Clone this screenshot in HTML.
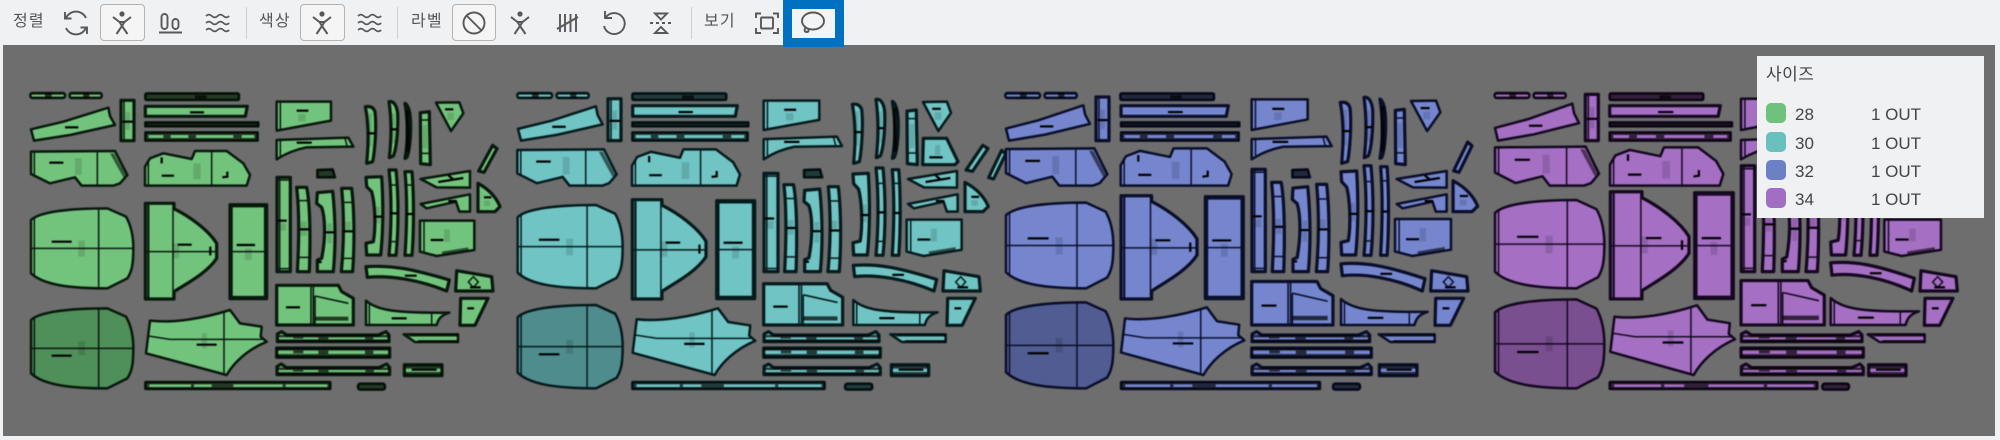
<!DOCTYPE html>
<html lang="ko"><head><meta charset="utf-8"><title>정렬</title>
<style>
html,body{margin:0;padding:0;background:#f0f1f3;width:2000px;height:440px;overflow:hidden;font-family:"Liberation Sans","Noto Sans CJK KR",sans-serif}
#gray{position:absolute;left:3px;top:45px;width:1992px;height:391px;background:#6e6e6e}
#pc{position:absolute;left:0;top:0;filter:blur(.6px)}
symbol{overflow:visible}
#pc *{vector-effect:non-scaling-stroke}
.o{stroke-width:2.5;stroke-linejoin:round}
.h{stroke-width:3.2;stroke-linejoin:round}
.l{fill:none;stroke-width:1.5}
.t{fill:none;stroke-width:2.2;stroke:#000}
.d{fill:#000;fill-opacity:.7;stroke:none}
.m{fill:#000;fill-opacity:.13;stroke:none}
#ic{position:absolute;left:0;top:0;filter:blur(.3px)}
#ic .s{fill:none;stroke:#585858;stroke-width:1.9}
.lb{position:absolute;color:#555;font-size:16px;letter-spacing:1.2px;line-height:20px;top:12px;filter:blur(.25px)}
.btn{position:absolute;top:4px;height:37px;background:#f5f5f6;border:1px solid #b4b4b4;border-radius:4px;box-sizing:border-box}
.sep{position:absolute;top:7px;height:32px;width:1px;background:#cfcfd1}
#blue{position:absolute;left:783px;top:0;width:61px;height:47px;box-sizing:border-box;border:9px solid #0070c0;background:#f3f4f5}
#panel{position:absolute;left:1757px;top:56px;width:227px;height:162px;background:#f0f1f3;color:#444;filter:blur(.25px)}
#panel div{position:absolute}
.sw{left:9px;width:20px;height:20px;border-radius:5px}
.n{left:38px;font-size:17px;line-height:20px}
.v{left:114px;font-size:17px;line-height:20px}
</style></head><body>
<div id="gray"></div>

<svg id="pc" width="2000" height="440" viewBox="0 0 6000 1320" xmlns="http://www.w3.org/2000/svg">
<defs>
<symbol id="s1" viewBox="31 68 104 17" preserveAspectRatio="none"><rect class="o" x="31" y="69" width="104" height="15" rx="6"/><rect class="d" x="33" y="71" width="100" height="3"/><rect class="d" x="33" y="80" width="100" height="3"/><rect class="d" x="75" y="68" width="20" height="17"/></symbol>
<symbol id="big" viewBox="33 415 307 240" preserveAspectRatio="none"><path class="o" d="M33 450C60 425 150 415 262 415L318 440C334 468 340 500 340 535C340 585 335 605 322 625L262 655C150 655 70 645 33 610Z"/><path class="l" d="M236 415V655M33 535H340M43 442V616"/><path class="t" d="M95 515H155"/><rect class="m" x="175" y="512" width="20" height="48"/></symbol>
<symbol id="dk" viewBox="33 415 307 240" preserveAspectRatio="none"><path class="o" d="M33 450C60 425 150 415 262 415L318 440C334 468 340 500 340 535C340 585 335 605 322 625L262 655C150 655 70 645 33 610Z"/><path class="l" d="M236 415V655M33 535H340M43 442V616"/><path class="t" d="M95 557H155"/><rect class="m" x="175" y="515" width="20" height="40"/></symbol>
<symbol id="a" viewBox="33 112 252 100" preserveAspectRatio="none"><path class="o" d="M33 178L130 155L265 113L270 138L285 165L150 195L42 212Z"/><path class="t" d="M135 172H175"/></symbol>
<symbol id="v" viewBox="302 90 41 123" preserveAspectRatio="none"><rect class="h" x="303" y="91" width="39" height="121"/><path class="l" d="M312 91V212"/><path class="t" d="M308 155H338"/><rect class="m" x="316" y="125" width="14" height="55"/></symbol>
<symbol id="b" viewBox="33 243 289 104" preserveAspectRatio="none"><path class="o" d="M33 245L285 243L322 315L300 340L280 347L185 347L165 322L90 340L33 312Z"/><path class="l" d="M232 243V347M43 245V318"/><path d="M270 250L310 322L318 315L282 250Z" fill="#000" fill-opacity=".55" stroke="none"/><path class="t" d="M88 278H130"/><rect class="m" x="165" y="265" width="20" height="50"/></symbol>
<symbol id="r1" viewBox="375 69 283 22" preserveAspectRatio="none"><rect class="o" x="376" y="70" width="281" height="20" rx="4"/><rect class="d" x="376" y="70" width="281" height="20" rx="4"/><rect class="d" x="525" y="76" width="35" height="10"/></symbol>
<symbol id="r2" viewBox="375 108 307 32" preserveAspectRatio="none"><path class="h" d="M376 109H682L676 139H376Z"/><path class="t" d="M510 127H552"/></symbol>
<symbol id="r3" viewBox="375 156 341 14" preserveAspectRatio="none"><rect class="o" x="376" y="157" width="339" height="12"/><rect class="d" x="376" y="157" width="339" height="12" style="fill-opacity:.78"/></symbol>
<symbol id="r4" viewBox="375 186 339 27" preserveAspectRatio="none"><rect class="o" x="376" y="187" width="337" height="25"/><path class="d" d="M376 187H713V195H376ZM376 204H713V212H376ZM376 195H386V204H376ZM703 195H713V204H703ZM505 193H528V206H505ZM640 193H665V206H640ZM430 195H452V204H430Z"/></symbol>
<symbol id="c" viewBox="375 243 315 104" preserveAspectRatio="none"><path class="o" d="M375 347L375 290L390 265L430 250L515 267L525 243L620 243L670 280L690 315L680 347Z"/><path class="l" d="M575 243V347M385 272V347"/><path class="t" d="M425 317H462M425 262V280M622 305V320L607 322"/><rect class="m" x="520" y="280" width="22" height="48"/></symbol>
<symbol id="d" viewBox="375 398 215 290" preserveAspectRatio="none"><path class="h" d="M376 400H462V416C510 440 565 480 590 520V565C560 610 500 640 462 665V687H376Z"/><path class="l" d="M459 400V687M376 545H590"/><path class="l" d="M385 404V683" style="stroke-width:2.2"/><path class="t" d="M473 524H515M571 530V556"/><rect class="m" x="458" y="520" width="20" height="45"/></symbol>
<symbol id="e" viewBox="628 402 114 286" preserveAspectRatio="none"><rect class="h" x="630" y="404" width="110" height="282"/><rect class="l" x="636" y="410" width="98" height="270"/><path class="l" d="M630 545H740"/><path class="t" d="M650 525H705"/><rect class="m" x="675" y="535" width="20" height="35"/></symbol>
<symbol id="f" viewBox="378 720 362 195" preserveAspectRatio="none"><path class="o" d="M390 752C460 760 550 745 630 720L660 760L725 770L722 800L740 815C680 840 640 880 620 915L378 850Z"/><path class="l" d="M612 725V912M385 798L450 808H735"/><path class="t" d="M530 824H590"/><rect class="m" x="545" y="790" width="16" height="45"/></symbol>
<symbol id="g" viewBox="375 935 557 23" preserveAspectRatio="none"><rect class="o" x="376" y="936" width="555" height="21" rx="2"/><path class="d" d="M376 936H931V943H376ZM376 951H931V957H376ZM376 943H388V951H376ZM922 943H931V951H922ZM513 943H522V951H513ZM788 943H797V951H788ZM575 943H640V951H575Z"/></symbol>
<symbol id="h" viewBox="769 93 164 90" preserveAspectRatio="none"><path class="o" d="M770 95H933V152L770 182Z"/><path class="l" d="M781 95V178"/><path class="t" d="M830 122H865"/><rect class="m" x="835" y="132" width="22" height="22"/></symbol>
<symbol id="i" viewBox="769 203 231 65" preserveAspectRatio="none"><path class="o" d="M770 210L985 203L1000 230L860 232C820 240 790 255 770 268Z"/><path class="l" d="M781 210V258M975 205L982 230"/><path class="t" d="M830 218H875"/></symbol>
<symbol id="j" viewBox="890 295 55 30" preserveAspectRatio="none"><path class="o" d="M892 300L938 298L945 322H892Z"/><rect class="d" x="892" y="298" width="50" height="24"/></symbol>
<symbol id="k1" viewBox="770 320 42 286" preserveAspectRatio="none"><rect class="h" x="771" y="322" width="40" height="283"/><path class="l" d="M779 322V605M771 330H811M771 596H811"/><path class="t" d="M773 452H800"/><rect class="m" x="780" y="460" width="18" height="22"/></symbol>
<symbol id="k2" viewBox="828 350 44 256" preserveAspectRatio="none"><path class="h" d="M830 352H860C870 400 872 500 868 605H832C838 500 838 420 830 352Z"/><path class="l" d="M833 392H864M837 562H868"/><path class="t" d="M840 478H868"/><rect class="m" x="842" y="455" width="18" height="42"/></symbol>
<symbol id="k3" viewBox="888 362 57 244" preserveAspectRatio="none"><path class="h" d="M892 368L938 364C945 430 948 520 940 605L892 605L892 570L905 565C918 500 915 440 905 412L890 400Z"/><path class="t" d="M915 487H942M895 576H905"/><rect class="m" x="922" y="460" width="14" height="60"/></symbol>
<symbol id="k4" viewBox="963 352 40 254" preserveAspectRatio="none"><path class="h" d="M965 355H995C1003 420 1004 520 998 605H964C972 520 972 430 965 355Z"/><path class="l" d="M968 397H998M968 565H998"/><path class="t" d="M970 484H1000"/><rect class="m" x="974" y="455" width="18" height="25"/></symbol>
<symbol id="l" viewBox="769 640 233 126" preserveAspectRatio="none"><path class="h" d="M770 646H955L965 665L1000 685V765H770Z"/><path class="l" d="M873 646V765" style="stroke-width:1.6"/><path class="l" d="M880 646V765" style="stroke-width:1.6"/><path class="l" d="M885 678L985 700M885 678V762" style="stroke-width:1.6"/><rect class="d" x="885" y="740" width="100" height="12"/><path class="t" d="M798 712H840"/></symbol>
<symbol id="m1" viewBox="770 783 338 35" preserveAspectRatio="none"><path class="h" d="M772 815V792L785 785L800 795H1075L1098 785L1107 795V815Z"/><path class="d" d="M775 795H1105V802H775ZM775 808H1105V815H775ZM820 795H850V806H820ZM895 795H925V808H895ZM1035 795H1060V808H1035Z"/></symbol>
<symbol id="m2" viewBox="769 832 341 31" preserveAspectRatio="none"><rect class="h" x="770" y="834" width="339" height="28"/><path class="d" d="M770 834H1109V842H770ZM770 852H1109V862H770ZM820 842H850V850H820ZM895 842H925V852H895ZM1035 842H1060V852H1035Z"/></symbol>
<symbol id="n1" viewBox="1036 107 32 173" preserveAspectRatio="none"><path class="h" d="M1038 110C1050 108 1060 112 1065 125C1070 170 1065 240 1058 275L1040 280C1046 220 1046 160 1036 110Z"/><path class="t" d="M1042 190H1066"/><rect class="m" x="1046" y="130" width="10" height="100"/></symbol>
<symbol id="n2" viewBox="1105 93 30 170" preserveAspectRatio="none"><path class="h" d="M1107 95C1120 92 1130 105 1133 130C1135 190 1128 240 1120 258L1108 263C1115 200 1115 150 1107 95Z"/><path class="t" d="M1112 178H1132"/><rect class="m" x="1117" y="130" width="8" height="90"/></symbol>
<symbol id="n3" viewBox="1153 98 19 167" preserveAspectRatio="none"><path class="h" d="M1155 100C1165 105 1172 130 1172 170C1172 220 1165 255 1160 263L1155 265C1165 210 1163 150 1155 100Z"/><rect class="d" x="1157" y="120" width="12" height="125"/></symbol>
<symbol id="n4" viewBox="1200 125 31 160" preserveAspectRatio="none"><path class="h" d="M1201 128L1228 125L1231 284L1202 281Z"/><path class="l" d="M1201 150H1229M1202 250H1230"/><rect class="m" x="1208" y="165" width="14" height="70"/></symbol>
<symbol id="o" viewBox="1247 97 83 86" preserveAspectRatio="none"><path class="o" d="M1248 98L1318 97L1330 130L1293 183Z"/><path class="t" d="M1275 118H1300"/><rect class="m" x="1282" y="128" width="20" height="22"/></symbol>
<symbol id="st" viewBox="1375 225 57 83" preserveAspectRatio="none"><path class="h" d="M1376 303L1418 226L1431 236L1392 307Z"/></symbol>
<symbol id="p1" viewBox="1036 320 52 236" preserveAspectRatio="none"><path class="h" d="M1038 322L1085 320C1090 400 1090 480 1082 555L1040 555L1038 520L1060 515C1068 470 1065 400 1055 365L1040 350Z"/><path class="t" d="M1062 440H1088"/><rect class="m" x="1066" y="410" width="14" height="50"/></symbol>
<symbol id="p2" viewBox="1105 298 30 260" preserveAspectRatio="none"><path class="h" d="M1107 300H1128C1136 380 1136 480 1128 556H1107C1114 480 1116 380 1107 300Z"/><path class="l" d="M1109 345H1131M1112 515H1131"/><path class="t" d="M1112 430H1134"/></symbol>
<symbol id="p3" viewBox="1153 303 29 255" preserveAspectRatio="none"><path class="h" d="M1155 305H1176C1182 380 1182 480 1176 556H1155C1160 480 1162 380 1155 305Z"/><path class="l" d="M1158 345H1179"/><path class="t" d="M1160 432H1181"/></symbol>
<symbol id="q1" viewBox="1200 303 152 52" preserveAspectRatio="none"><path class="o" d="M1202 327L1350 303V353L1250 352Z"/><path class="t" d="M1255 336L1330 324M1285 316L1300 328"/></symbol>
<symbol id="q2" viewBox="1200 372 152 54" preserveAspectRatio="none"><path class="o" d="M1202 402L1350 373V425L1318 425L1308 395L1220 415Z"/><path class="t" d="M1285 393H1310"/></symbol>
<symbol id="tr" viewBox="1372 338 68 88" preserveAspectRatio="none"><path class="h" d="M1374 340C1410 360 1430 385 1440 410L1425 425L1374 425Z"/><path class="t" d="M1392 382H1414"/><rect class="m" x="1392" y="392" width="18" height="16"/></symbol>
<symbol id="u" viewBox="1200 450 165 110" preserveAspectRatio="none"><path class="o" d="M1200 452H1363V540L1250 558L1200 545Z"/><path class="l" d="M1212 452V550"/><path class="t" d="M1232 510H1270"/><path d="M1265 545L1345 532V540L1268 553Z" fill="#000" fill-opacity=".6" stroke="none"/><rect class="m" x="1272" y="478" width="18" height="38"/></symbol>
<symbol id="vc" viewBox="1036 587 252 76" preserveAspectRatio="none"><path class="h" d="M1038 590C1110 585 1170 595 1288 630L1280 663C1200 630 1110 615 1042 622Z"/><path class="t" d="M1155 617H1190"/></symbol>
<symbol id="w" viewBox="1305 600 115 65" preserveAspectRatio="none"><path class="h" d="M1310 602L1415 620L1419 663H1307Z"/><path class="l" d="M1360 620L1375 636L1360 652L1345 636Z"/><path class="t" d="M1350 652H1382"/></symbol>
<symbol id="x" viewBox="1036 690 252 76" preserveAspectRatio="none"><path class="o" d="M1038 692C1070 720 1120 730 1288 728C1265 735 1255 745 1250 765H1038Z"/><path class="l" d="M1235 730V765M1048 702V765"/><path class="t" d="M1115 745H1160"/></symbol>
<symbol id="y" viewBox="1317 682 88 86" preserveAspectRatio="none"><path class="h" d="M1322 685H1404L1365 766H1320Z"/><path class="t" d="M1342 715H1362"/></symbol>
<symbol id="z" viewBox="1150 790 165 30" preserveAspectRatio="none"><path class="o" d="M1151 793H1314V816H1185Z"/><path class="d" d="M1175 793H1314V800H1162ZM1195 810H1314V816H1190Z"/></symbol>
<symbol id="aa" viewBox="1152 882 115 36" preserveAspectRatio="none"><rect class="h" x="1153" y="884" width="113" height="33"/><path class="d" d="M1155 886H1264V896H1155ZM1155 906H1264V915H1155Z"/><path class="t" d="M1175 899H1250"/></symbol>
<symbol id="ab" viewBox="1013 940 83 20" preserveAspectRatio="none"><rect class="o" x="1014" y="941" width="81" height="18" rx="7"/><rect class="d" x="1014" y="941" width="81" height="18" rx="7"/></symbol>
<symbol id="ex" viewBox="1237 202 108 83" preserveAspectRatio="none"><path class="h" d="M1240 205H1310L1344 275L1335 284H1238Z"/><path class="t" d="M1258 262H1298"/><rect class="m" x="1275" y="225" width="16" height="30"/></symbol>
</defs>

<!-- GREEN 28 -->
<g transform="translate(60 210)" fill="#72c47d" stroke="#08180c">
<use href="#s1" x="31" y="68" width="104" height="17"/><use href="#s1" x="149" y="68" width="96" height="17"/>
<use href="#a" x="33" y="112" width="252" height="100"/><use href="#v" x="302" y="90" width="41" height="123"/>
<use href="#b" x="33" y="243" width="289" height="104"/><use href="#big" x="33" y="415" width="307" height="240"/>
<use href="#dk" x="33" y="715" width="307" height="240" fill="#4f8f5a"/>
<use href="#r1" x="375" y="69" width="283" height="22"/><use href="#r2" x="375" y="108" width="307" height="32"/>
<use href="#r3" x="375" y="156" width="341" height="14"/><use href="#r4" x="375" y="186" width="339" height="27"/>
<use href="#c" x="375" y="243" width="315" height="104"/><use href="#d" x="375" y="398" width="215" height="290"/>
<use href="#e" x="628" y="402" width="114" height="286"/><use href="#f" x="378" y="720" width="362" height="195"/>
<use href="#g" x="375" y="935" width="557" height="23"/><use href="#h" x="769" y="93" width="164" height="90"/>
<use href="#i" x="769" y="203" width="231" height="65"/><use href="#j" x="890" y="295" width="55" height="30"/>
<use href="#k1" x="770" y="320" width="42" height="286"/><use href="#k2" x="828" y="350" width="44" height="256"/>
<use href="#k3" x="888" y="362" width="57" height="244"/><use href="#k4" x="963" y="352" width="40" height="254"/>
<use href="#l" x="769" y="640" width="233" height="126"/><use href="#m1" x="770" y="783" width="338" height="35"/>
<use href="#m2" x="769" y="832" width="341" height="31"/><use href="#m1" x="769" y="880" width="341" height="37"/>
<use href="#n1" x="1036" y="107" width="32" height="173"/><use href="#n2" x="1105" y="93" width="30" height="170"/>
<use href="#n3" x="1153" y="98" width="19" height="167"/><use href="#n4" x="1200" y="125" width="31" height="160"/>
<use href="#o" x="1247" y="97" width="83" height="86"/><use href="#st" x="1375" y="225" width="57" height="83"/>
<use href="#p1" x="1036" y="320" width="52" height="236"/><use href="#p2" x="1105" y="298" width="30" height="260"/>
<use href="#p3" x="1153" y="303" width="29" height="255"/><use href="#q1" x="1200" y="303" width="152" height="52"/>
<use href="#q2" x="1200" y="372" width="152" height="54"/><use href="#tr" x="1372" y="338" width="68" height="88"/>
<use href="#u" x="1200" y="450" width="165" height="110"/><use href="#vc" x="1036" y="587" width="252" height="76"/>
<use href="#w" x="1305" y="600" width="115" height="65"/><use href="#x" x="1036" y="690" width="252" height="76"/>
<use href="#y" x="1317" y="682" width="88" height="86"/><use href="#z" x="1150" y="790" width="165" height="30"/>
<use href="#aa" x="1152" y="882" width="115" height="36"/><use href="#ab" x="1013" y="940" width="83" height="20"/>
</g>

<!-- TEAL 30 -->
<g transform="translate(1530 210)" fill="#70c4c4" stroke="#061a1c">
<use href="#s1" x="22" y="68" width="104" height="17"/><use href="#s1" x="140" y="68" width="96" height="17"/>
<use href="#a" x="24" y="108" width="254" height="104"/><use href="#v" x="293" y="85" width="41" height="128"/>
<use href="#b" x="22" y="238" width="298" height="109"/><use href="#big" x="23" y="405" width="315" height="250"/>
<use href="#dk" x="23" y="705" width="315" height="250" fill="#4f8c8d"/>
<use href="#r1" x="366" y="69" width="284" height="22"/><use href="#r2" x="367" y="106" width="315" height="34"/>
<use href="#r3" x="366" y="156" width="350" height="14"/><use href="#r4" x="366" y="186" width="348" height="27"/>
<use href="#c" x="366" y="238" width="324" height="109"/><use href="#d" x="366" y="387" width="222" height="301"/>
<use href="#e" x="618" y="390" width="118" height="298"/><use href="#f" x="368" y="715" width="368" height="200"/>
<use href="#g" x="366" y="935" width="579" height="23"/><use href="#h" x="760" y="90" width="168" height="91"/>
<use href="#i" x="760" y="200" width="236" height="68"/><use href="#j" x="880" y="295" width="57" height="30"/>
<use href="#k1" x="761" y="308" width="44" height="298"/><use href="#k2" x="820" y="342" width="42" height="264"/>
<use href="#k3" x="880" y="355" width="56" height="251"/><use href="#k4" x="953" y="347" width="40" height="259"/>
<use href="#l" x="760" y="635" width="240" height="131"/><use href="#m1" x="760" y="783" width="348" height="35"/>
<use href="#m2" x="760" y="832" width="352" height="31"/><use href="#m1" x="760" y="880" width="352" height="37"/>
<use href="#n1" x="1027" y="100" width="31" height="180"/><use href="#n2" x="1096" y="86" width="30" height="177"/>
<use href="#n3" x="1145" y="92" width="20" height="173"/><use href="#n4" x="1190" y="120" width="32" height="165"/>
<use href="#o" x="1238" y="95" width="85" height="88"/><use href="#ex" x="1237" y="202" width="108" height="83"/>
<use href="#st" x="1367" y="225" width="68" height="80"/><use href="#st" x="1435" y="240" width="53" height="88"/>
<use href="#p1" x="1027" y="310" width="51" height="246"/><use href="#p2" x="1096" y="292" width="30" height="266"/>
<use href="#p3" x="1145" y="297" width="27" height="261"/><use href="#q1" x="1192" y="303" width="151" height="52"/>
<use href="#q2" x="1192" y="372" width="153" height="54"/><use href="#tr" x="1363" y="335" width="72" height="91"/>
<use href="#u" x="1190" y="447" width="167" height="113"/><use href="#vc" x="1028" y="583" width="252" height="80"/>
<use href="#w" x="1297" y="600" width="115" height="65"/><use href="#x" x="1028" y="688" width="255" height="78"/>
<use href="#y" x="1308" y="682" width="89" height="86"/><use href="#z" x="1140" y="790" width="168" height="30"/>
<use href="#aa" x="1143" y="882" width="114" height="36"/><use href="#ab" x="1004" y="940" width="84" height="20"/>
</g>

<!-- BLUE 32 -->
<g transform="translate(2985 210)" fill="#7586cf" stroke="#0a0e28">
<use href="#s1" x="31" y="68" width="104" height="17"/><use href="#s1" x="149" y="68" width="96" height="17"/>
<use href="#a" x="33" y="105" width="252" height="107"/><use href="#v" x="302" y="80" width="41" height="133"/>
<use href="#b" x="33" y="235" width="304" height="112"/><use href="#big" x="33" y="398" width="322" height="257"/>
<use href="#dk" x="33" y="697" width="322" height="258" fill="#515c92"/>
<use href="#r1" x="375" y="69" width="283" height="22"/><use href="#r2" x="377" y="106" width="323" height="34"/>
<use href="#r3" x="377" y="156" width="357" height="14"/><use href="#r4" x="377" y="186" width="355" height="27"/>
<use href="#c" x="377" y="235" width="333" height="112"/><use href="#d" x="377" y="375" width="229" height="313"/>
<use href="#e" x="629" y="378" width="118" height="310"/><use href="#f" x="378" y="712" width="370" height="203"/>
<use href="#g" x="377" y="935" width="599" height="23"/><use href="#h" x="769" y="86" width="169" height="95"/>
<use href="#i" x="769" y="200" width="241" height="68"/><use href="#j" x="890" y="295" width="55" height="30"/>
<use href="#k1" x="770" y="296" width="42" height="310"/><use href="#k2" x="828" y="335" width="42" height="271"/>
<use href="#k3" x="890" y="348" width="55" height="258"/><use href="#k4" x="963" y="340" width="40" height="266"/>
<use href="#l" x="769" y="628" width="247" height="138"/><use href="#m1" x="769" y="783" width="356" height="35"/>
<use href="#m2" x="769" y="832" width="361" height="31"/><use href="#m1" x="769" y="880" width="361" height="37"/>
<use href="#n1" x="1036" y="94" width="32" height="186"/><use href="#n2" x="1105" y="80" width="30" height="183"/>
<use href="#n3" x="1153" y="85" width="19" height="180"/><use href="#n4" x="1200" y="118" width="31" height="167"/>
<use href="#o" x="1247" y="92" width="89" height="91"/><use href="#st" x="1375" y="215" width="57" height="93"/>
<use href="#p1" x="1036" y="303" width="52" height="253"/><use href="#p2" x="1105" y="285" width="30" height="273"/>
<use href="#p3" x="1155" y="288" width="27" height="270"/><use href="#q1" x="1203" y="303" width="154" height="52"/>
<use href="#q2" x="1203" y="372" width="154" height="54"/><use href="#tr" x="1372" y="330" width="76" height="96"/>
<use href="#u" x="1200" y="445" width="170" height="115"/><use href="#vc" x="1036" y="578" width="254" height="85"/>
<use href="#w" x="1305" y="600" width="115" height="65"/><use href="#x" x="1036" y="685" width="262" height="81"/>
<use href="#y" x="1317" y="682" width="90" height="86"/><use href="#z" x="1150" y="790" width="170" height="30"/>
<use href="#aa" x="1152" y="882" width="115" height="36"/><use href="#ab" x="1013" y="940" width="83" height="20"/>
</g>

<!-- PURPLE 34 -->
<g transform="translate(4455 210)" fill="#a56fc4" stroke="#14081e">
<use href="#s1" x="29" y="68" width="104" height="17"/><use href="#s1" x="146" y="68" width="96" height="17"/>
<use href="#a" x="30" y="100" width="252" height="112"/><use href="#v" x="300" y="72" width="41" height="141"/>
<use href="#b" x="30" y="230" width="312" height="117"/><use href="#big" x="30" y="390" width="328" height="265"/>
<use href="#dk" x="30" y="688" width="328" height="267" fill="#7a4f90"/>
<use href="#r1" x="373" y="69" width="283" height="22"/><use href="#r2" x="373" y="106" width="333" height="34"/>
<use href="#r3" x="373" y="156" width="369" height="14"/><use href="#r4" x="373" y="186" width="365" height="27"/>
<use href="#c" x="375" y="232" width="340" height="115"/><use href="#d" x="375" y="363" width="237" height="325"/>
<use href="#e" x="627" y="366" width="120" height="322"/><use href="#f" x="376" y="706" width="374" height="209"/>
<use href="#g" x="373" y="935" width="625" height="23"/><use href="#h" x="767" y="84" width="173" height="97"/>
<use href="#i" x="767" y="203" width="248" height="65"/>
<use href="#k1" x="768" y="285" width="42" height="321"/><use href="#k2" x="828" y="320" width="42" height="286"/>
<use href="#k3" x="888" y="340" width="57" height="266"/><use href="#k4" x="962" y="330" width="40" height="276"/>
<use href="#l" x="767" y="625" width="253" height="141"/><use href="#m1" x="767" y="783" width="365" height="35"/>
<use href="#m2" x="767" y="832" width="369" height="31"/><use href="#m1" x="767" y="880" width="369" height="37"/>
<use href="#p1" x="1035" y="295" width="53" height="261"/><use href="#p2" x="1105" y="278" width="30" height="280"/>
<use href="#p3" x="1153" y="280" width="29" height="278"/>
<use href="#u" x="1198" y="447" width="172" height="113"/><use href="#vc" x="1035" y="575" width="253" height="88"/>
<use href="#w" x="1303" y="600" width="115" height="65"/><use href="#x" x="1035" y="682" width="267" height="84"/>
<use href="#y" x="1315" y="682" width="90" height="86"/><use href="#z" x="1147" y="790" width="173" height="30"/>
<use href="#aa" x="1150" y="882" width="114" height="36"/><use href="#ab" x="1011" y="940" width="82" height="20"/>
</g>
</svg>

<div class="lb" style="left:13px">정렬</div>
<div class="btn" style="left:100px;width:45px"></div>
<div class="sep" style="left:246px"></div>
<div class="lb" style="left:259px">색상</div>
<div class="btn" style="left:300px;width:45px"></div>
<div class="sep" style="left:397px"></div>
<div class="lb" style="left:411px">라벨</div>
<div class="btn" style="left:452px;width:44px"></div>
<div class="sep" style="left:691px"></div>
<div class="lb" style="left:704px">보기</div>
<div id="blue"></div>

<svg id="ic" width="2000" height="46" viewBox="0 0 2000 46" xmlns="http://www.w3.org/2000/svg">
<defs>
<g id="pe"><circle cx="0" cy="-9" r="2.6" fill="#585858"/><path d="M-9 -6L-2.5 -1H2.5L9 -6M-2.5 -1L0 3L-5.5 11M2.500 -1L0 3L5.500 11" style="fill:none;stroke:#585858;stroke-width:2"/></g>
<g id="wa"><path d="M0 0q2.9 -2.8 5.800 0t5.800 0t5.800 0t5.800 0M0 7q2.900 -2.800 5.800 0t5.800 0t5.800 0t5.800 0M0 14q2.900 -2.800 5.800 0t5.800 0t5.800 0t5.800 0" style="fill:none;stroke:#585858;stroke-width:1.6"/></g>
</defs>
<path class="s" d="M66 18A11 11 0 0 1 86 18M86 28A11 11 0 0 1 66 28M65 12V18.500H71.500M87 34V27.500H80.500"/>
<use href="#pe" x="122" y="23"/>
<path class="s" d="M161.500 17a3 3 0 0 1 6 0V26a3 3 0 0 1 -6 0ZM172.500 22a3 3 0 0 1 6 0V26a3 3 0 0 1 -6 0ZM159 32.500H182"/>
<use href="#wa" x="206" y="16"/>
<use href="#pe" x="322" y="23"/>
<use href="#wa" x="358" y="16"/>
<circle class="s" cx="474" cy="23" r="10.500"/><path class="s" d="M466.500 15.500L481.500 30.500"/>
<use href="#pe" x="520" y="23"/>
<path class="s" d="M560 14V32M565 14V32M570.500 14V32M576 14V32M557 29L578 17"/>
<path class="s" d="M606 17A10.500 10.500 0 1 1 604 26M605 11V18H612"/>
<path class="s" d="M655 13.500H667L661 19.500ZM655 33H667L661 27Z"/><path class="s" d="M650 23H672" stroke-dasharray="3 3"/>
<path class="s" d="M756 18V13.500H761M773 13.500H778V18M778 28V33H773M761 33H756V28"/><rect class="s" x="761" y="17.500" width="12" height="11" rx="1"/>
<ellipse class="s" cx="813" cy="21" rx="11" ry="8.500"/><path class="s" d="M806 27.500C804 29 804 32 807 32C809 32 809 29.500 807.500 28.500"/>
</svg>

<div id="panel">
<div style="left:9px;top:9px;font-size:17px;line-height:20px;letter-spacing:.5px">사이즈</div>
<div class="sw" style="top:47px;background:#70c17c"></div><div class="n" style="top:49px">28</div><div class="v" style="top:49px">1 OUT</div>
<div class="sw" style="top:76px;background:#69c0bf"></div><div class="n" style="top:78px">30</div><div class="v" style="top:78px">1 OUT</div>
<div class="sw" style="top:104px;background:#6d80c6"></div><div class="n" style="top:106px">32</div><div class="v" style="top:106px">1 OUT</div>
<div class="sw" style="top:132px;background:#a26ec2"></div><div class="n" style="top:134px">34</div><div class="v" style="top:134px">1 OUT</div>
</div>
</body></html>
